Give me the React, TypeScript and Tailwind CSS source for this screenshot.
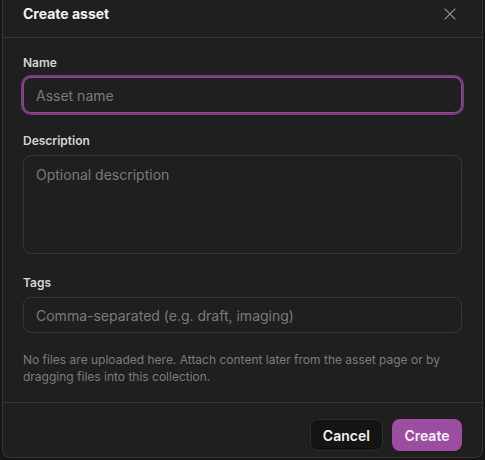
import { X } from "lucide-react";

const font = { fontFamily: "Inter, 'Noto Sans', sans-serif" };

const Field = ({ label, children }: { label: string; children: React.ReactNode }) => (
  <div className="flex flex-col gap-[6px]">
    <label className="text-[12px] font-semibold leading-[16px] text-[#d4d4d4]">{label}</label>
    {children}
  </div>
);

export default function App() {
  return (
    <div className="h-[460px] w-[485px] overflow-hidden bg-[#161616]" style={font}>
      <div className="ml-[2px] flex h-[458px] w-[481px] flex-col rounded-b-[8px] border-x border-b border-[#353535] bg-[#1f1f1f]">
        <div className="flex h-[38px] shrink-0 items-start justify-between border-b border-[#363636] pl-5 pr-[22px] pt-[3px]">
          <h2 className="text-[14px] font-bold leading-[22px] text-[#f2f2f2]">Create asset</h2>
          <button className="mt-[1px] text-[#8f8f8f]">
            <X size={20} strokeWidth={1.3} />
          </button>
        </div>

        <div className="flex flex-col px-5 pt-[17px]">
          <Field label="Name">
            <input
              placeholder="Asset name"
              className="h-[36px] rounded-[8px] border border-[#8b4a90] bg-[#1f1f1f] px-3 text-[14px] text-[#e5e5e5] outline-none ring-2 ring-[#7a3c7f] placeholder:text-[#7a7a7a]"
            />
          </Field>
          <div className="mt-[20px]">
            <Field label="Description">
              <textarea
                placeholder="Optional description"
                className="h-[99px] resize-none rounded-[8px] border border-[#363636] bg-[#1f1f1f] px-3 pb-[8px] pt-[9px] text-[14px] leading-[20px] text-[#e5e5e5] outline-none placeholder:text-[#7a7a7a]"
              />
            </Field>
          </div>
          <div className="mt-[21px]">
            <Field label="Tags">
              <input
                placeholder="Comma-separated (e.g. draft, imaging)"
                className="h-[36px] rounded-[8px] border border-[#363636] bg-[#1f1f1f] px-3 text-[14px] text-[#e5e5e5] outline-none placeholder:text-[#7a7a7a]"
              />
            </Field>
          </div>
          <p className="mt-[18px] text-[12px] leading-[17px] text-[#7c7c7c]">
            No files are uploaded here. Attach content later from the asset page or by dragging files into this collection.
          </p>
        </div>

        <div className="mt-[17px] flex flex-1 items-start justify-end gap-[9px] border-t border-[#363636] pr-5 pt-[16px]">
          <button className="h-[32px] rounded-[8px] border border-[#2c2c2c] bg-[#141414] px-[12px] text-[14px] font-semibold text-[#f2f2f2]">
            Cancel
          </button>
          <button className="h-[32px] rounded-[8px] bg-[#9b4ea0] px-[12.5px] text-[14px] font-semibold text-[#f7f0f8]">
            Create
          </button>
        </div>
      </div>
    </div>
  );
}
